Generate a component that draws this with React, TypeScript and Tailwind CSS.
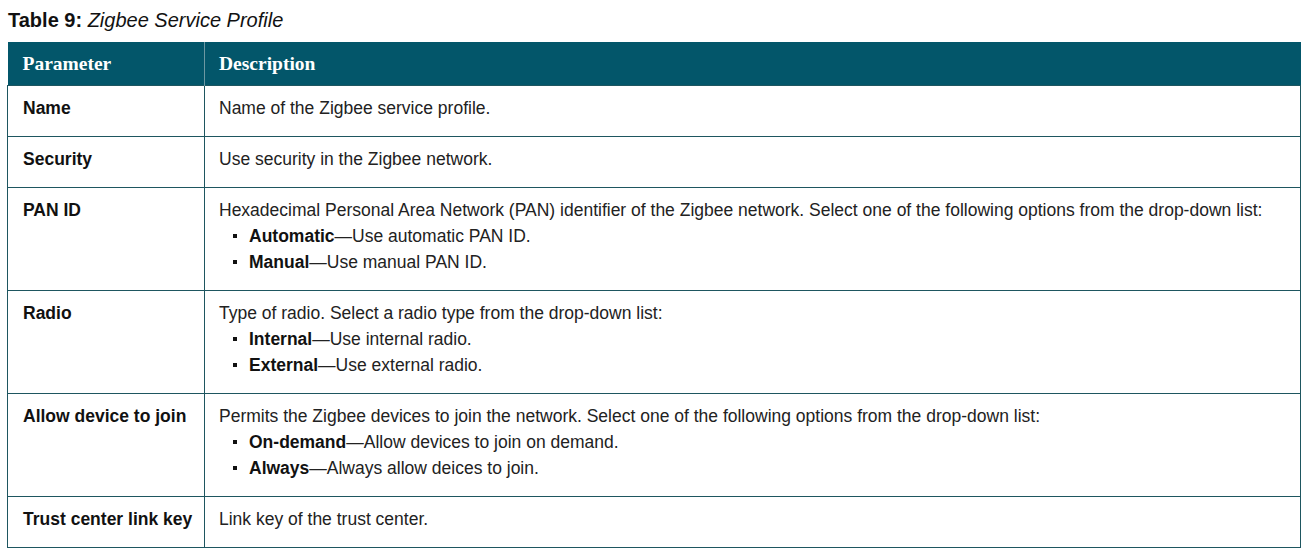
import React from "react";

const rows: { p: string; d: string; items?: [string, string][] }[] = [
  { p: "Name", d: "Name of the Zigbee service profile." },
  { p: "Security", d: "Use security in the Zigbee network." },
  {
    p: "PAN ID",
    d: "Hexadecimal Personal Area Network (PAN) identifier of the Zigbee network. Select one of the following options from the drop-down list:",
    items: [
      ["Automatic", "Use automatic PAN ID."],
      ["Manual", "Use manual PAN ID."],
    ],
  },
  {
    p: "Radio",
    d: "Type of radio. Select a radio type from the drop-down list:",
    items: [
      ["Internal", "Use internal radio."],
      ["External", "Use external radio."],
    ],
  },
  {
    p: "Allow device to join",
    d: "Permits the Zigbee devices to join the network. Select one of the following options from the drop-down list:",
    items: [
      ["On-demand", "Allow devices to join on demand."],
      ["Always", "Always allow deices to join."],
    ],
  },
  { p: "Trust center link key", d: "Link key of the trust center." },
];

export default function App() {
  return (
    <div className="bg-white w-[1306px] h-[553px] font-['Liberation_Sans',Arial,sans-serif] text-[17.5px]">
      <div className="pt-[9px] pl-[8px] h-[42px] text-[20px] leading-[22px] text-[#111]">
        <span className="font-bold">Table 9: </span>
        <span className="italic">Zigbee Service Profile</span>
      </div>
      <table className="ml-[7px] w-[1294px] border-collapse">
        <thead>
          <tr className="bg-[#03566a] h-[43px]">
            <th className="w-[197px] p-0 text-left pl-[15px] font-['Liberation_Serif',serif] font-bold text-white text-[19.5px] border-r border-[#6d98a2]">
              Parameter
            </th>
            <th className="p-0 text-left pl-[14px] font-['Liberation_Serif',serif] font-bold text-white text-[19.5px]">
              Description
            </th>
          </tr>
        </thead>
        <tbody>
          {rows.map((r) => (
            <tr key={r.p}>
              <td className="align-top border border-[#1e5660] pl-[15px] pt-[9px] pb-[15px] leading-[26px] font-bold text-[#111]">
                {r.p}
              </td>
              <td className="align-top border border-[#1e5660] pl-[14px] pt-[9px] pb-[15px] leading-[26px] text-[#222]">
                <div>{r.d}</div>
                {r.items && (
                  <ul>
                    {r.items.map(([b, t]) => (
                      <li key={b} className="flex items-center">
                        <span className="ml-[14px] mr-[12px] w-[4px] h-[4px] bg-[#111] inline-block" />
                        <span>
                          <b className="text-[#111]">{b}</b>—{t}
                        </span>
                      </li>
                    ))}
                  </ul>
                )}
              </td>
            </tr>
          ))}
        </tbody>
      </table>
    </div>
  );
}
